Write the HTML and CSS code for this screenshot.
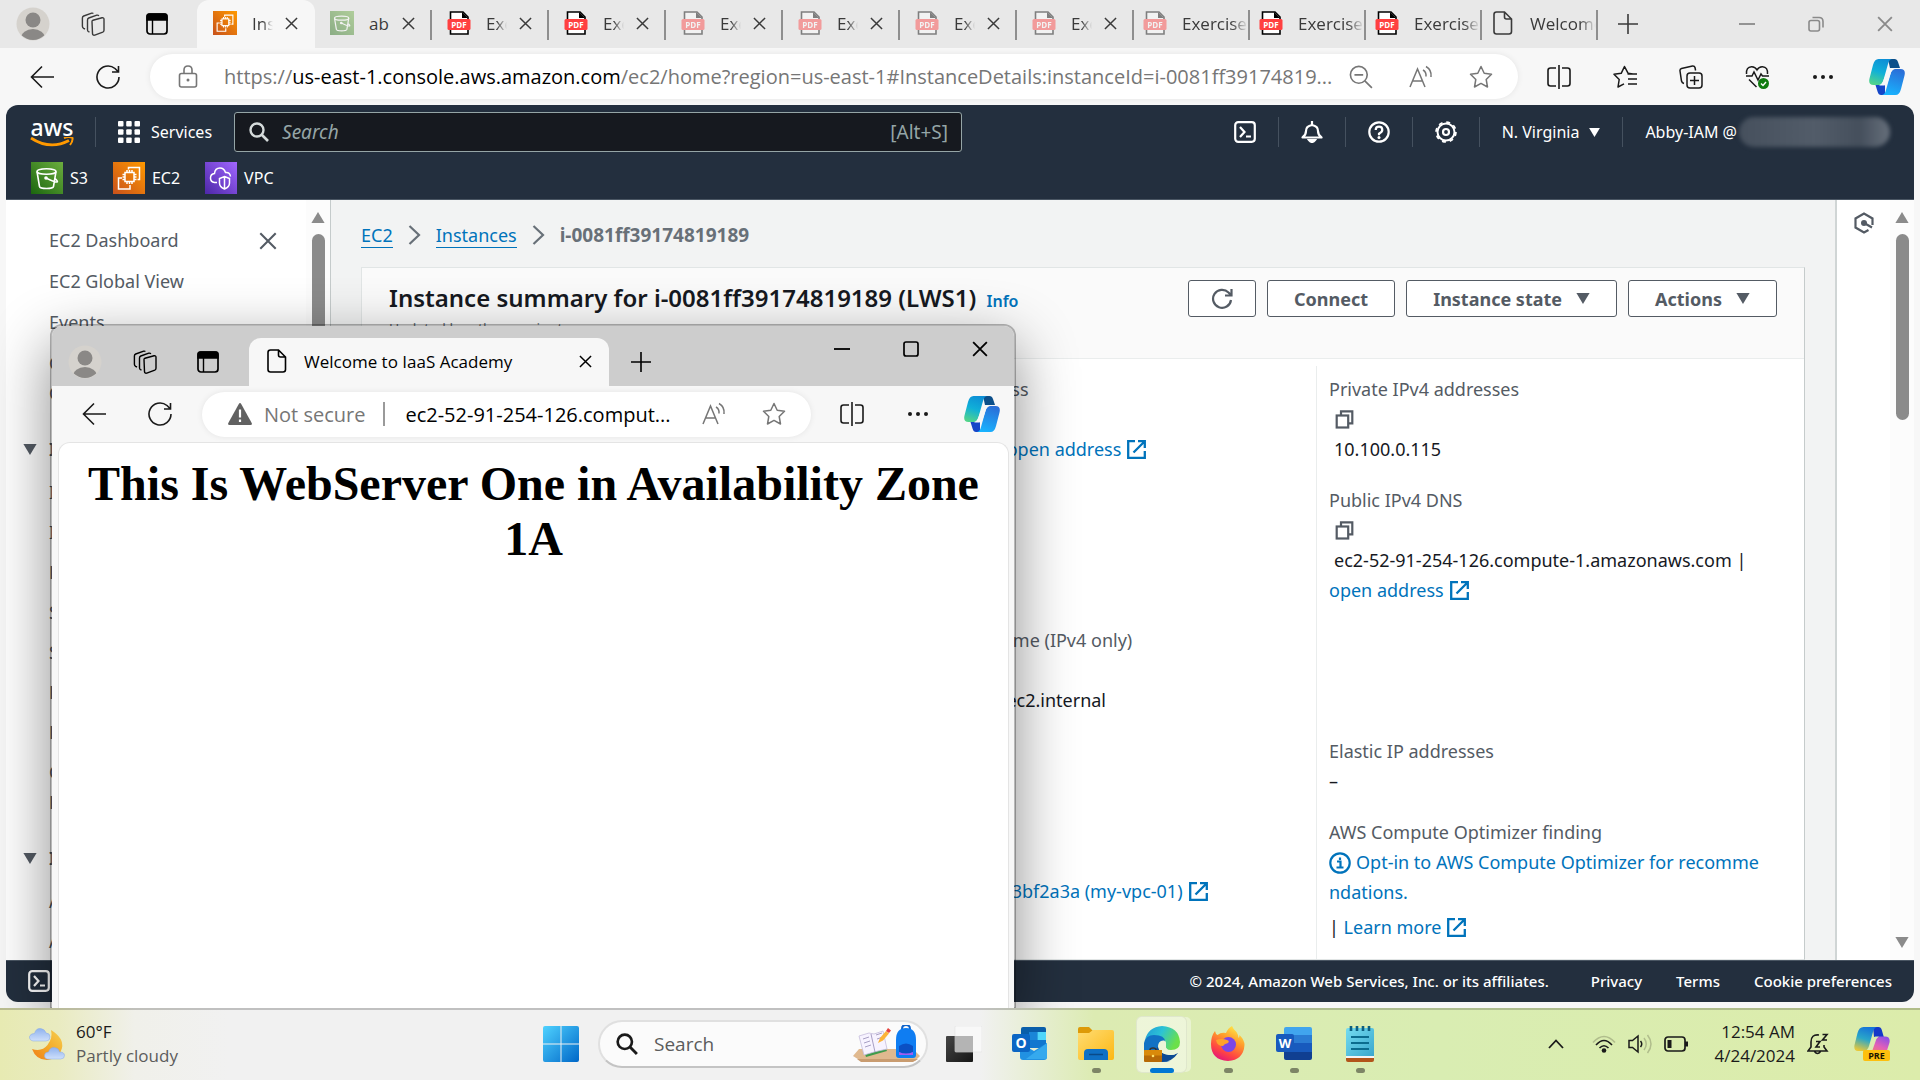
FILE: index.html
```html
<!DOCTYPE html>
<html lang="en">
<head>
<meta charset="utf-8">
<title>Instance details | EC2 | us-east-1</title>
<link rel="stylesheet" href="styles.css">
</head>
<body>
<svg class="sprite" aria-hidden="true">
  <defs>
    <linearGradient id="g-orange" x1="0" y1="1" x2="1" y2="0"><stop offset="0" stop-color="#c8511b"/><stop offset="1" stop-color="#f90"/></linearGradient>
    <linearGradient id="g-green" x1="0" y1="1" x2="1" y2="0"><stop offset="0" stop-color="#1b660f"/><stop offset="1" stop-color="#6cae3e"/></linearGradient>
    <linearGradient id="g-purple" x1="0" y1="1" x2="1" y2="0"><stop offset="0" stop-color="#4d27a8"/><stop offset="1" stop-color="#a166ff"/></linearGradient>
    <linearGradient id="g-cop1" x1="0.6" y1="0" x2="0.3" y2="1"><stop offset="0" stop-color="#0d8fd6"/><stop offset=".5" stop-color="#10b0d8"/><stop offset="1" stop-color="#52d48a"/></linearGradient>
    <linearGradient id="g-cop2" x1="0.6" y1="0" x2="0.3" y2="1"><stop offset="0" stop-color="#2a6fd8"/><stop offset="1" stop-color="#18b4ff"/></linearGradient>
    <linearGradient id="g-pre1" x1="0.6" y1="0" x2="0.3" y2="1"><stop offset="0" stop-color="#1673d8"/><stop offset=".5" stop-color="#2aa7c8"/><stop offset="1" stop-color="#e8c83a"/></linearGradient>
    <linearGradient id="g-pre2" x1="0.8" y1="0" x2="0.3" y2="1"><stop offset="0" stop-color="#8a4fe8"/><stop offset=".5" stop-color="#e25fb8"/><stop offset="1" stop-color="#f58a5a"/></linearGradient>
    <linearGradient id="g-win" gradientUnits="userSpaceOnUse" x1="0" y1="0" x2="36" y2="36"><stop offset="0" stop-color="#4fd2ff"/><stop offset="1" stop-color="#0067c8"/></linearGradient>
    <linearGradient id="g-moon" x1="1" y1="0" x2="0" y2="1"><stop offset="0" stop-color="#f6cf52"/><stop offset=".5" stop-color="#f3ab2a"/><stop offset="1" stop-color="#f07d16"/></linearGradient>
    <linearGradient id="g-cloud" x1="0" y1="0" x2="0" y2="1"><stop offset="0" stop-color="#8fb2ee"/><stop offset="1" stop-color="#cfe0fb"/></linearGradient>
    <linearGradient id="g-folder" x1="0" y1="0" x2="1" y2="1"><stop offset="0" stop-color="#ffdc73"/><stop offset="1" stop-color="#fcb814"/></linearGradient>
    <linearGradient id="g-edge" x1="0" y1="0" x2="1" y2=".4"><stop offset="0" stop-color="#1f9ad8"/><stop offset=".5" stop-color="#2cc3d5"/><stop offset="1" stop-color="#6be04a"/></linearGradient>
    <linearGradient id="g-fire" x1=".8" y1="0" x2=".3" y2="1"><stop offset="0" stop-color="#fff04a"/><stop offset=".4" stop-color="#ff9a2a"/><stop offset=".75" stop-color="#ff4542"/><stop offset="1" stop-color="#e3157a"/></linearGradient>
    <linearGradient id="g-note" x1="0" y1="0" x2="1" y2="1"><stop offset="0" stop-color="#74dcf0"/><stop offset="1" stop-color="#3aa7cd"/></linearGradient>
    <linearGradient id="g-dark" x1="0" y1="0" x2="1" y2="1"><stop offset="0" stop-color="#454545"/><stop offset="1" stop-color="#161616"/></linearGradient>
  </defs>
  <symbol id="avatar" viewBox="0 0 34 34"><clipPath id="av-clip"><circle cx="17" cy="17" r="16"/></clipPath><circle cx="17" cy="17" r="16.500" fill="#d5d2cd"/><g clip-path="url(#av-clip)" fill="#8a8886"><circle cx="17" cy="13" r="7.500"/><ellipse cx="17" cy="31" rx="12" ry="9"/></g></symbol>
  <symbol id="spaces" viewBox="0 0 24 24"><g fill="none" stroke="currentColor" stroke-width="1.400" stroke-linejoin="round"><path d="M11 9.500q0-1 1-1.300l9-2.400q2-.4 2 1.400v11q0 1.400-1.200 1.900l-8 3q-2 .6-2.300-1.500z"/><path d="M8.500 20l-1-.3q-1-.5-1-2V8q0-1.400 1.300-2l8-2.800q1.400-.4 2 .8"/><path d="M4 17l-1.400-.7q-1.200-.7-1.200-2V6q0-1.400 1.300-2l8-2.800q1-.3 1.700.3"/></g></symbol>
  <symbol id="vtabs" viewBox="0 0 22 22"><rect x="1" y="1" width="20" height="20" rx="3" fill="none" stroke="currentColor" stroke-width="1.700"/><path d="M1 3q0-2 2-2h16q2 0 2 2v4H1zM6.500 7v14" fill="currentColor" stroke="currentColor" stroke-width="1.400"/></symbol>
  <symbol id="x" viewBox="0 0 14 14"><path d="M1 1l12 12M13 1L1 13" stroke="currentColor" stroke-width="1.600" fill="none"/></symbol>
  <symbol id="plus" viewBox="0 0 22 22"><path d="M11 1v20M1 11h20" stroke="currentColor" stroke-width="1.600"/></symbol>
  <symbol id="min" viewBox="0 0 16 16"><path d="M0 8h16" stroke="currentColor" stroke-width="1.800"/></symbol>
  <symbol id="max" viewBox="0 0 16 16"><rect x="1" y="1" width="14" height="14" rx="2" fill="none" stroke="currentColor" stroke-width="1.700"/></symbol>
  <symbol id="restore" viewBox="0 0 16 16"><g fill="none" stroke="currentColor" stroke-width="1.600"><rect x="1" y="4.500" width="10.500" height="10.500" rx="2"/><path d="M4.500 1.500H11q4 0 4 4v6"/></g></symbol>
  <symbol id="pdf" viewBox="0 0 24 24"><path d="M3.500 1h12.500l5 5v17H3.500z" fill="#fff" stroke="#000" stroke-width="1.600"/><path d="M15 1l6 6h-6z" fill="#000"/><rect x="0.500" y="8" width="23" height="11" rx="1.500" fill="#ff4040"/><text x="12" y="16.500" text-anchor="middle" font-family="Open Sans, sans-serif" font-weight="700" font-size="8" fill="#fff">PDF</text></symbol>
  <symbol id="page" viewBox="0 0 20 24"><path d="M3.500 1h8l7 7v12.500q0 2.500-2.500 2.500H3.500Q1 23 1 20.500v-17Q1 1 3.500 1zM11.500 1v5q0 2 2 2h5" fill="none" stroke="currentColor" stroke-width="1.600"/></symbol>
  <symbol id="s3" viewBox="0 0 32 32"><rect width="32" height="32" fill="url(#g-green)"/><g fill="none" stroke="#fff" stroke-width="1.600"><ellipse cx="15.500" cy="9.500" rx="9.500" ry="2.700"/><path d="M6 9.500l2.500 15q.5 2 7 2t7-2L25 9.500M15 16q8 4 10.500 4t-2-4"/></g><circle cx="15" cy="16" r="1.800" fill="#fff"/></symbol>
  <symbol id="ec2" viewBox="0 0 32 32"><rect width="32" height="32" fill="url(#g-orange)"/><g fill="none" stroke="#fff" stroke-width="1.500"><rect x="12" y="10.500" width="9" height="9"/><path d="M14 8v2.500M16.500 8v2.500M19 8v2.500M14 19.500V22M16.500 19.500V22M19 19.500V22M9.500 12.500H12M9.500 15H12M9.500 17.500H12M21 12.500h2.500M21 15h2.500M21 17.500h2.500M15.500 7.500V5.500h11v12h-2M9 16H5.500v11h11.500v-4"/></g></symbol>
  <symbol id="vpc" viewBox="0 0 32 32"><rect width="32" height="32" fill="url(#g-purple)"/><g fill="none" stroke="#fff" stroke-width="1.500"><path d="M12 20.500H9.500Q5.500 20 5.500 16t4-4.500Q10 6 15 6q4 0 5.500 4.500 4.500-.5 5 4"/><path d="M19.500 14.500l5 2v4.500q0 4-5 6-5-2-5-6v-4.500zM19.500 14.500V27"/></g></symbol>
  <symbol id="back" viewBox="0 0 24 24"><path d="M24 12H1.500M12 1.500L1.500 12 12 22.500" fill="none" stroke="currentColor" stroke-width="1.600"/></symbol>
  <symbol id="reload" viewBox="0 0 24 24"><path d="M23 12A11 11 0 1 1 19 3.500L22 6.500M22.500 1v6H16" fill="none" stroke="currentColor" stroke-width="1.600"/></symbol>
  <symbol id="lock" viewBox="0 0 20 24"><rect x="1.500" y="8.500" width="17" height="13.500" rx="2" fill="none" stroke="currentColor" stroke-width="1.600"/><path d="M6 8.500V5q0-4 4-4t4 4v3.500" fill="none" stroke="currentColor" stroke-width="1.600"/><circle cx="10" cy="15" r="1.500" fill="currentColor"/></symbol>
  <symbol id="zoomout" viewBox="0 0 22 22"><g fill="none" stroke="currentColor" stroke-width="1.500"><circle cx="9" cy="9" r="7.700"/><path d="M14.500 14.500L21 21M5 9h8"/></g></symbol>
  <symbol id="aloud" viewBox="0 0 24 24"><g fill="none" stroke="currentColor" stroke-width="1.500"><path d="M1 22L8.500 4 16 22M3.500 16h10M14 5q3.500 2 3 6.500M17 1.500q6 3.500 5 10.500"/></g></symbol>
  <symbol id="star" viewBox="0 0 24 24"><path d="M12 1.500l3.200 6.800 7.300 1-5.300 5.200 1.300 7.500-6.500-3.600L5.500 22l1.300-7.500L1.500 9.300l7.300-1z" fill="none" stroke="currentColor" stroke-width="1.500" stroke-linejoin="round"/></symbol>
  <symbol id="split" viewBox="0 0 24 24"><path d="M9 3H3.500Q1 3 1 5.500v13Q1 21 3.500 21H9M15 3h5.500Q23 3 23 5.500v13q0 2.500-2.500 2.500H15M12 0v24" fill="none" stroke="currentColor" stroke-width="1.600"/></symbol>
  <symbol id="favs" viewBox="0 0 24 24"><path d="M20 9l-5-.8L11.500 1.500 8.200 8.300l-7.200 1 5.200 5.200L5 22l6-3.200M14.500 9h9.500M15 14h9M15 19h9" fill="none" stroke="currentColor" stroke-width="1.500" stroke-linejoin="round"/></symbol>
  <symbol id="collect" viewBox="0 0 24 24"><g fill="none" stroke="currentColor" stroke-width="1.500"><rect x="8" y="8" width="15" height="15" rx="3"/><path d="M15.500 11v9M11 15.500h9M5 18.500Q3 18 2.500 16L1 6q-.3-2 1.500-2.500L13.500 1q2-.2 2.500 1.500l.6 3"/></g></symbol>
  <symbol id="heart" viewBox="0 0 24 24"><g fill="none" stroke="currentColor" stroke-width="1.500"><path d="M1.500 9Q1 2 6.500 1.700 10 1.500 12 5q2-3.500 5.500-3.300Q23 2 22.500 9M1 11h6l2-4 4 8 3-6 1.500 2H24M4 14.500l7.500 7.500"/></g><circle cx="18.500" cy="18.500" r="5.500" fill="#107c10"/><path d="M16 18.500l2 2 3-3.500" fill="none" stroke="#fff" stroke-width="1.400"/></symbol>
  <symbol id="dots" viewBox="0 0 24 6"><g fill="currentColor"><circle cx="4" cy="3" r="2"/><circle cx="12" cy="3" r="2"/><circle cx="20" cy="3" r="2"/></g></symbol>
  <symbol id="copilot" viewBox="0 0 36 36"><path d="M19 0h6.500q2.500 0 3.500 3l2 6H21z" fill="#0c4f8a"/><path d="M16 36h-4q-2.500 0-3.300-3L6.500 26H16z" fill="#1546c8"/><path d="M9.500 0H23q-3 .5-4 5l-4.500 16q-1.500 5-5 5H4.500Q-1 26 .5 19.500L4 6Q5.500 0 9.500 0z" fill="url(#g-cop1)"/><path d="M26.500 36H13q3-.5 4-5l4.500-16q1.500-5 5-5h5q5.500 0 4 6.500L32 30q-1.500 6-5.500 6z" fill="url(#g-cop2)"/><path d="M21.500 10h4q-3 .8-4 5l-3.200 9.500q-1 2.500-4.300 2h-4q3-1 4.500-5.500L18 12.500q1-2.500 3.500-2.500z" fill="#f7f7f7"/></symbol>
  <symbol id="pre" viewBox="0 0 36 34"><path d="M19 0h5.500q2.500 0 3.300 3l2 7H20z" fill="#1438c8"/><path d="M9.500 0H23q-3 .5-4 5l-4 14q-1.500 5-5 5H4Q-.5 24 .5 18L3.500 6Q5 0 9.500 0z" fill="url(#g-pre1)"/><path d="M27 29H13q3-.5 4-5l4-10q1.500-4.500 5-4.500h5q5.500 0 4.500 6L32.500 25Q31 29 27 29z" fill="url(#g-pre2)"/><path d="M21.500 9.500h4q-3 .8-4 5L18.500 23h-4.500q1-1 2-4l2-7q1-2.500 3.500-2.500z" fill="#dcecb2"/><rect x="9" y="23" width="27" height="11" rx="2" fill="#fdbf0e"/><text x="22.500" y="31.500" text-anchor="middle" font-family="Open Sans, sans-serif" font-weight="700" font-size="9" fill="#1a1300">PRE</text></symbol>
  <symbol id="grid" viewBox="0 0 22 22"><g fill="#fff"><rect width="5.500" height="5.500" rx="1"/><rect x="8.200" width="5.500" height="5.500" rx="1"/><rect x="16.500" width="5.500" height="5.500" rx="1"/><rect y="8.200" width="5.500" height="5.500" rx="1"/><rect x="8.200" y="8.200" width="5.500" height="5.500" rx="1"/><rect x="16.500" y="8.200" width="5.500" height="5.500" rx="1"/><rect y="16.500" width="5.500" height="5.500" rx="1"/><rect x="8.200" y="16.500" width="5.500" height="5.500" rx="1"/><rect x="16.500" y="16.500" width="5.500" height="5.500" rx="1"/></g></symbol>
  <symbol id="search" viewBox="0 0 20 20"><circle cx="8" cy="8" r="6.500" fill="none" stroke="currentColor" stroke-width="2.400"/><path d="M12.500 12.500L19 19" stroke="currentColor" stroke-width="2.600"/></symbol>
  <symbol id="shell" viewBox="0 0 22 22"><rect x="1.200" y="1.200" width="19.600" height="19.600" rx="3" fill="none" stroke="currentColor" stroke-width="2.200"/><path d="M6 6l4.500 5L6 16M12 15.500h5" fill="none" stroke="currentColor" stroke-width="2.200"/></symbol>
  <symbol id="bell" viewBox="0 0 22 22"><path d="M1.500 16.500Q5 14 5 10q0-5 6-6 6 1 6 6 0 4 3.500 6.500z" fill="none" stroke="#fff" stroke-width="2.200" stroke-linejoin="round"/><path d="M11 0v4M8 19q3 4 6 0z" fill="#fff" stroke="#fff" stroke-width="2.200"/></symbol>
  <symbol id="help" viewBox="0 0 22 22"><g fill="none" stroke="#fff" stroke-width="2.200"><circle cx="11" cy="11" r="9.700"/><path d="M7.700 9Q7.700 5.700 11 5.700T14.300 9q0 1.800-3.300 3.700v1.500"/></g><circle cx="11" cy="16.500" r="1.500" fill="#fff"/></symbol>
  <symbol id="gear" viewBox="0 0 22 22"><g fill="none" stroke="#fff"><circle cx="11" cy="11" r="8.500" stroke-width="2"/><circle cx="11" cy="11" r="9.900" stroke-width="1.800" stroke-dasharray="3.900 3.875"/><circle cx="11" cy="11" r="3" stroke-width="2.200"/></g></symbol>
  <symbol id="caret" viewBox="0 0 12 10"><path d="M0 0h12L6 10z" fill="currentColor"/></symbol>
  <symbol id="chev" viewBox="0 0 12 20"><path d="M1 1l9.500 9L1 19" fill="none" stroke="currentColor" stroke-width="2.200"/></symbol>
  <symbol id="refresh" viewBox="0 0 22 22"><path d="M20 12a9 9 0 1 1-2.500-7.500L20 7M20.500 1v6.500H14" fill="none" stroke="currentColor" stroke-width="2.200"/></symbol>
  <symbol id="copy" viewBox="0 0 18 19"><g fill="none" stroke="#545b64" stroke-width="2.200"><rect x="1.200" y="5.500" width="11.500" height="12"/><path d="M5.500 5V1.300h11.300v12H13"/></g></symbol>
  <symbol id="ext" viewBox="0 0 19 19"><path d="M8 1.200H1.200v16.600h16.600V11M11 1.200h6.800V8M17 2L6.500 12.500" fill="none" stroke="#0073bb" stroke-width="2.300"/></symbol>
  <symbol id="info" viewBox="0 0 22 22"><circle cx="11" cy="11" r="9.700" fill="none" stroke="#0073bb" stroke-width="2.200"/><path d="M8 9.500h3.500V15M7.500 15.500h7M11 5.500v2.500" fill="none" stroke="#0073bb" stroke-width="2.200"/></symbol>
  <symbol id="hex" viewBox="0 0 20 22"><path d="M18.500 13V6.500L10 1.500l-8.500 5v9l8.500 5 4.500-2.500" fill="none" stroke="#545b64" stroke-width="2.200"/><circle cx="10" cy="11" r="3" fill="#545b64"/><path d="M11 11.500l7 4" stroke="#545b64" stroke-width="2.200"/></symbol>
  <symbol id="smile" viewBox="0 0 44 11"><path d="M1 1q19 12.500 38 2.500" fill="none" stroke="#f90" stroke-width="2.800"/><path d="M34 1q5-2 8.500 0 .5 3-2.500 7" fill="none" stroke="#f90" stroke-width="2"/></symbol>
  <symbol id="warn" viewBox="0 0 24 24"><path d="M10.800 2q1.200-2 2.400 0l10.500 19q.8 2-1.200 2h-21q-2 0-1.200-2z" fill="#616161"/><path d="M12 7.500v8M12 17.500v2.500" stroke="#fff" stroke-width="2.200"/></symbol>
  <symbol id="weather" viewBox="0 0 36 34"><path d="M22 3q13 8 11 18T18 33Q7 33 3 22q10 3 15.500-4T22 3z" fill="url(#g-moon)"/><path d="M4 14q-4-1-3.500-4.500Q2 6 5.500 6.500 7 1 11.500 1.500 16 2 17 6q4 0 4 4t-4 4z" fill="url(#g-cloud)" stroke="#86a9e6" stroke-width=".5"/><path d="M18 32q-3-1-2.500-4t4-3q1.500-5 6-4.500t5 4.500q5 0 5 3.500T31.500 32z" fill="url(#g-cloud)" stroke="#86a9e6" stroke-width=".5"/></symbol>
  <symbol id="win" viewBox="0 0 36 36"><g fill="url(#g-win)"><path d="M2 0h15.500v17.500H0V2q0-2 2-2zM18.500 0H34q2 0 2 2v15.500H18.500zM0 18.500h17.500V36H2q-2 0-2-2zM18.500 18.500H36V34q0 2-2 2H18.500z"/></g></symbol>
  <symbol id="school" viewBox="0 0 68 38"><path d="M0 31l6-7h54l7 7-5 5H8z" fill="#e0b98f"/><path d="M4 34l4 3h52l5-3z" fill="#c99c70"/><path d="M7 13l19-5 8 18-21 6z" fill="#3f9b4b"/><path d="M6 11l10-3 5 1 9-3 4 18-9 2-4 1-10 3z" fill="#f7f3ff" stroke="#c5bcdc" stroke-width=".8"/><path d="M18 9l4 18M10 14l6-2M11 18l6-2M12 22l6-2M23 10l6-2M24 14l6-2" stroke="#a89fc4"/><path d="M25 18l2-5 6-7 3 2.500-6 7z" fill="#fcb438"/><path d="M33 6l2-3 3 2.500L36 8z" fill="#e5443f"/><path d="M49 4q0-4 4-4t4 4" fill="none" stroke="#0e62c9" stroke-width="2"/><path d="M43 15q0-12 10-12t10 12v15q0 3-3 3H46q-3 0-3-3z" fill="#0f7df2"/><path d="M46 21q7-5 14 0v6q-7 4-14 0z" fill="#0b50c4"/><path d="M46 27q7 3 14 0v3H46z" fill="#a45cf0"/></symbol>
  <symbol id="tasks" viewBox="0 0 36 36"><rect x="0" y="10" width="27" height="26" rx="1" fill="url(#g-dark)"/><rect x="9" y="0" width="27" height="26" rx="1" fill="#f8f8f8" stroke="#e2e2e2" stroke-width=".6"/><path d="M9 10h18v16H9z" fill="#b4b4b4"/></symbol>
  <symbol id="outlook" viewBox="0 0 36 34"><path d="M9 2q0-2 2-2h21q2 0 2 2v16H9z" fill="#0a5eaa"/><path d="M17 5h8.500v8H17z" fill="#1a86d8"/><path d="M25.500 5H34v8h-8.500z" fill="#4fd6fa"/><path d="M17 13h17v8H17z" fill="#1177cf"/><path d="M8 16l14 8 13-8v14q0 3-3 3H11q-3 0-3-3z" fill="#2191e2"/><path d="M35 16L14 32h19q2 0 2-2z" fill="#35a9ee"/><rect y="7" width="18" height="18" rx="2" fill="#0c66c4"/><text x="9" y="21" text-anchor="middle" font-family="Open Sans, sans-serif" font-weight="700" font-size="14" fill="#fff">O</text></symbol>
  <symbol id="folder" viewBox="0 0 36 34"><path d="M0 2q0-2 2-2h9l4 4v6H0z" fill="#dd9a08"/><path d="M0 6h11l4-3h19q2 0 2 2v26q0 2-2 2H2q-2 0-2-2z" fill="url(#g-folder)"/><path d="M6 33v-7q0-4 4-4h16q4 0 4 4v7z" fill="#0f70c4"/><path d="M11 27.500h14" stroke="#0a4a88" stroke-width="1.500"/></symbol>
  <symbol id="edge" viewBox="0 0 36 36"><path d="M1 14Q4 1 18 0q17 1 18 16 0 8-9 8-6 0-5-4 1-6-5-8-9-3-16 2z" fill="url(#g-edge)"/><path d="M0 17q2-8 10-8 12 0 11 8-7-2-7 6 0 10 12 12Q8 39 0 24z" fill="#1272c4"/><path d="M15 20q0 8 10 9 5 0 9-2-6 9-16 9-7-2-7-9 0-4 4-7z" fill="#0c4a94"/><path d="M14 21q0-7 6-6.500 3 1.500 1.500 5.500 1 5 6.500 5 4 0 7-2-1 6-8 6-12-1-13-8z" fill="#ecf5d8"/><rect y="24" width="18" height="12" rx="1" fill="#b76a06"/><path d="M0 25q0-1 1-1h16q1 0 1 1v4.500H0z" fill="#d98a0a"/><path d="M6 24q0-2 3-2t3 2" fill="none" stroke="#333" stroke-width="1.500"/><circle cx="9" cy="30" r="1.300" fill="#ffe066"/></symbol>
  <symbol id="firefox" viewBox="0 0 34 36"><path d="M17 35Q0 34 0 18 0 10 4 5q.5 3 2.500 4Q10 6 15 7q2-5 6-7 1 3 4.500 6 2 3 2 6 1-1 1-3 5 5 5 10-1 15-16.500 16z" fill="url(#g-fire)"/><circle cx="17.500" cy="18.500" r="7.500" fill="#7b46e8"/><path d="M5 14q6-2 11 0 3 1 1 3-4 1-5 3-6 0-7-6z" fill="#ffa22a"/></symbol>
  <symbol id="word" viewBox="0 0 36 34"><path d="M8 2q0-2 2-2h24q2 0 2 2v6H8z" fill="#41a5ee"/><path d="M8 8h28v8H8z" fill="#2b7cd3"/><path d="M8 16h28v9H8z" fill="#185abd"/><path d="M8 25h28v6q0 2-2 2H10q-2 0-2-2z" fill="#103f91"/><rect y="7" width="18" height="18" rx="2" fill="#185abd"/><text x="9" y="21" text-anchor="middle" font-family="Open Sans, sans-serif" font-weight="700" font-size="13" fill="#fff">W</text></symbol>
  <symbol id="notepad" viewBox="0 0 28 36"><path d="M0 30h28v4q0 2-2 2H2q-2 0-2-2z" fill="#b2541a"/><path d="M0 28h28v4H0z" fill="#f4f4f4"/><path d="M0 4q0-2 2-2h24q2 0 2 2v26H0z" fill="url(#g-note)"/><path d="M5 0v5M11 0v5M17 0v5M23 0v5" stroke="#0d5f80" stroke-width="2.600"/><path d="M5 11h18M5 17h18M5 23h18" stroke="#0b6c8e" stroke-width="1.800"/></symbol>
  <symbol id="up" viewBox="0 0 16 10"><path d="M1 9l7-7.500L15 9" fill="none" stroke="#1a1a1a" stroke-width="1.800"/></symbol>
  <symbol id="wifi" viewBox="0 0 24 18"><g fill="none" stroke-width="1.600"><path d="M1 7.500q11-12 22 0" stroke="#b0bd8c"/><path d="M4 10q8-9 16 0M7.500 13q4.500-4.500 9 0" stroke="#1a1a1a"/></g><circle cx="12" cy="15.500" r="2.300" fill="#1a1a1a"/></symbol>
  <symbol id="volume" viewBox="0 0 24 20"><g fill="none" stroke-width="1.500"><path d="M1 6.500h3.500L10 2v16l-5.500-4.500H1zM12.500 7q2.500 3 0 6" stroke="#1a1a1a"/><path d="M16 4q4.500 6 0 12M19.500 1q7 9 0 18" stroke="#b0bd8c"/></g></symbol>
  <symbol id="battery" viewBox="0 0 24 16"><rect x="1" y="1" width="20" height="14" rx="3" fill="none" stroke="#1a1a1a" stroke-width="1.700"/><path d="M3.500 4h4v8h-4zM21 5.500h3v5h-3z" fill="#1a1a1a"/></symbol>
  <symbol id="snooze" viewBox="0 0 22 22"><g fill="none" stroke="#1a1a1a" stroke-width="1.600"><path d="M12 2Q4 1 4 9v5l-3 4h19l-3-4v-2M7.500 18.500q3 4 6 0M9 8.500h4l-4 5.500h4M15.500 1.500H20L15.500 7H20"/></g></symbol>
</svg>

<div class="desktop">
  <main class="browser">
    <header class="tabs">
      <button class="ico tabs-avatar" aria-label="Profile"><svg class="i34"><use href="#avatar"/></svg></button>
      <button class="ico tabs-space" aria-label="Workspaces"><svg class="i24"><use href="#spaces"/></svg></button>
      <button class="ico tabs-vert" aria-label="Tab actions"><svg class="i22"><use href="#vtabs"/></svg></button>
      <nav class="tablist" aria-label="Tabs">
        <div class="tab active"><svg class="i24"><use href="#ec2"/></svg><span class="tab-name">Instance</span><button class="ico" aria-label="Close tab"><svg class="i13"><use href="#x"/></svg></button></div>
        <div class="tab"><svg class="i24 faded"><use href="#s3"/></svg><span class="tab-name whole">ab</span><button class="ico" aria-label="Close tab"><svg class="i13"><use href="#x"/></svg></button></div>
        <div class="tab"><svg class="i24"><use href="#pdf"/></svg><span class="tab-name">Exercise</span><button class="ico" aria-label="Close tab"><svg class="i13"><use href="#x"/></svg></button></div>
        <div class="tab"><svg class="i24"><use href="#pdf"/></svg><span class="tab-name">Exercise</span><button class="ico" aria-label="Close tab"><svg class="i13"><use href="#x"/></svg></button></div>
        <div class="tab"><svg class="i24 faded"><use href="#pdf"/></svg><span class="tab-name">Exercise</span><button class="ico" aria-label="Close tab"><svg class="i13"><use href="#x"/></svg></button></div>
        <div class="tab"><svg class="i24 faded"><use href="#pdf"/></svg><span class="tab-name">Exercise</span><button class="ico" aria-label="Close tab"><svg class="i13"><use href="#x"/></svg></button></div>
        <div class="tab"><svg class="i24 faded"><use href="#pdf"/></svg><span class="tab-name">Exercise</span><button class="ico" aria-label="Close tab"><svg class="i13"><use href="#x"/></svg></button></div>
        <div class="tab"><svg class="i24 faded"><use href="#pdf"/></svg><span class="tab-name">Exercise</span><button class="ico" aria-label="Close tab"><svg class="i13"><use href="#x"/></svg></button></div>
        <div class="tab wide"><svg class="i24 faded"><use href="#pdf"/></svg><span class="tab-name">Exercise</span></div>
        <div class="tab wide"><svg class="i24"><use href="#pdf"/></svg><span class="tab-name">Exercise</span></div>
        <div class="tab wide"><svg class="i24"><use href="#pdf"/></svg><span class="tab-name">Exercise</span></div>
        <div class="tab wide"><svg class="i24"><use href="#page"/></svg><span class="tab-name">Welcome</span></div>
      </nav>
      <button class="ico tabs-new" aria-label="New tab"><svg class="i22"><use href="#plus"/></svg></button>
      <div class="winctl dim">
        <button class="ico" aria-label="Minimize"><svg class="i16"><use href="#min"/></svg></button>
        <button class="ico" aria-label="Restore"><svg class="i16"><use href="#restore"/></svg></button>
        <button class="ico" aria-label="Close"><svg class="i16"><use href="#x"/></svg></button>
      </div>
    </header>

    <div class="toolbar">
      <button class="ico" aria-label="Back"><svg class="i24"><use href="#back"/></svg></button>
      <button class="ico tool-reload" aria-label="Reload"><svg class="i24"><use href="#reload"/></svg></button>
      <div class="omnibox">
        <svg class="i24"><use href="#lock"/></svg>
        <div class="url" role="textbox" aria-label="Address">https://<b>us-east-1.console.aws.amazon.com</b>/ec2/home?region=us-east-1#InstanceDetails:instanceId=i-0081ff39174819...</div>
        <button class="ico" aria-label="Zoom out"><svg class="i24"><use href="#zoomout"/></svg></button>
        <button class="ico" aria-label="Read aloud"><svg class="i24"><use href="#aloud"/></svg></button>
        <button class="ico" aria-label="Add to favorites"><svg class="i24"><use href="#star"/></svg></button>
      </div>
      <div class="tool-actions">
        <button class="ico" aria-label="Split screen"><svg class="i24"><use href="#split"/></svg></button>
        <button class="ico" aria-label="Favorites"><svg class="i24"><use href="#favs"/></svg></button>
        <button class="ico" aria-label="Collections"><svg class="i24"><use href="#collect"/></svg></button>
        <button class="ico" aria-label="Browser essentials"><svg class="i24"><use href="#heart"/></svg></button>
        <button class="ico" aria-label="Settings and more"><svg class="i24"><use href="#dots"/></svg></button>
        <button class="ico" aria-label="Copilot"><svg class="i36"><use href="#copilot"/></svg></button>
      </div>
    </div>

    <section class="console">
      <header class="awsnav">
        <div class="awsnav-top">
          <a class="aws-logo" href="#home">aws<svg><use href="#smile"/></svg></a>
          <i class="vr"></i>
          <button class="services"><svg class="i22"><use href="#grid"/></svg>Services</button>
          <label class="aws-search"><svg class="i20"><use href="#search"/></svg><input type="text" placeholder="Search" aria-label="Search"><span>[Alt+S]</span></label>
          <div class="aws-tools">
            <button class="ico" aria-label="CloudShell"><svg class="i22"><use href="#shell"/></svg></button><i class="vr"></i>
            <button class="ico" aria-label="Notifications"><svg class="i22"><use href="#bell"/></svg></button><i class="vr"></i>
            <button class="ico" aria-label="Help"><svg class="i22"><use href="#help"/></svg></button><i class="vr"></i>
            <button class="ico" aria-label="Settings"><svg class="i22"><use href="#gear"/></svg></button><i class="vr"></i>
            <button class="region">N. Virginia<svg class="caret"><use href="#caret"/></svg></button><i class="vr"></i>
            <button class="account">Abby-IAM @<span class="smudge"></span></button>
          </div>
        </div>
        <nav class="awsnav-favs">
          <a href="#s3"><svg class="i32"><use href="#s3"/></svg>S3</a>
          <a href="#ec2"><svg class="i32"><use href="#ec2"/></svg>EC2</a>
          <a href="#vpc"><svg class="i32"><use href="#vpc"/></svg>VPC</a>
        </nav>
      </header>

      <div class="console-body">
        <aside class="sidebar">
          <nav class="side-nav">
            <button class="ico side-close" aria-label="Close navigation"><svg class="i18"><use href="#x"/></svg></button>
            <ul>
              <li><a href="#d">EC2 Dashboard</a></li>
              <li><a href="#g">EC2 Global View</a></li>
              <li><a href="#e">Events</a></li>
              <li><a href="#c">Console-to-Code<br>Console Preview</a></li>
            </ul>
            <details open><summary><svg class="tri"><use href="#caret"/></svg>Instances</summary>
              <ul>
                <li><a href="#i">Instances</a></li>
                <li><a href="#t">Instance Types</a></li>
                <li><a href="#l">Launch Templates</a></li>
                <li><a href="#s">Spot Requests</a></li>
                <li><a href="#p">Savings Plans</a></li>
                <li><a href="#r">Reserved Instances</a></li>
                <li><a href="#h">Dedicated Hosts</a></li>
                <li><a href="#cr">Capacity<br>Reservations</a></li>
              </ul>
            </details>
            <details open><summary><svg class="tri"><use href="#caret"/></svg>Images</summary>
              <ul>
                <li><a href="#a">AMIs</a></li>
                <li><a href="#ac">AMI Catalog</a></li>
              </ul>
            </details>
          </nav>
          <div class="scroll"><svg class="arrow up"><use href="#caret"/></svg><i class="thumb tall"></i></div>
        </aside>

        <section class="page">
          <nav class="crumbs" aria-label="Breadcrumb">
            <a href="#ec2">EC2</a><svg><use href="#chev"/></svg><a href="#inst">Instances</a><svg><use href="#chev"/></svg><strong>i-0081ff39174819189</strong>
          </nav>
          <article class="card">
            <header class="card-head">
              <div class="card-title">
                <h1>Instance summary for i-0081ff39174819189 (LWS1) <a href="#info">Info</a></h1>
                <p>Updated less than a minute ago</p>
              </div>
              <div class="card-actions">
                <button aria-label="Refresh"><svg class="i22"><use href="#refresh"/></svg></button>
                <button>Connect</button>
                <button>Instance state<svg><use href="#caret"/></svg></button>
                <button>Actions<svg><use href="#caret"/></svg></button>
              </div>
            </header>
            <div class="card-grid">
              <dl></dl>
              <dl>
                <div class="cell-tall"><dt>Public IPv4 address</dt><dd><svg class="copy"><use href="#copy"/></svg><br><span class="val">52.91.254.126</span> | <a href="#o">open address<svg class="ext"><use href="#ext"/></svg></a></dd></div>
                <div class="cell-host"><dt>Private IP DNS name (IPv4 only)</dt><dd><svg class="copy"><use href="#copy"/></svg><br><span class="val">ip-10-100-0-115.ec2.internal</span></dd></div>
                <div><dt>VPC ID</dt><dd><svg class="copy"><use href="#copy"/></svg><br><a href="#v">vpc-0d4e91c7a583bf2a3a (my-vpc-01)<svg class="ext"><use href="#ext"/></svg></a></dd></div>
              </dl>
              <dl>
                <div class="cell"><dt>Private IPv4 addresses</dt><dd><svg class="copy"><use href="#copy"/></svg><br><span class="val">10.100.0.115</span></dd></div>
                <div class="cell-tall"><dt>Public IPv4 DNS</dt><dd><svg class="copy"><use href="#copy"/></svg><br><span class="val">ec2-52-91-254-126.compute-1.amazonaws.com</span> |<br><a href="#o2">open address<svg class="ext"><use href="#ext"/></svg></a></dd></div>
                <div class="cell-short"><dt>Elastic IP addresses</dt><dd>–</dd></div>
                <div><dt>AWS Compute Optimizer finding</dt><dd><a href="#opt"><svg class="infoicon"><use href="#info"/></svg>Opt-in to AWS Compute Optimizer for recomme<br>ndations.</a><p class="learn">| <a href="#lm">Learn more<svg class="ext"><use href="#ext"/></svg></a></p></dd></div>
              </dl>
            </div>
          </article>
        </section>

        <aside class="tools"><button class="ico" aria-label="Tools"><svg class="i22"><use href="#hex"/></svg></button></aside>
        <div class="scroll"><svg class="arrow up"><use href="#caret"/></svg><i class="thumb"></i><svg class="arrow down"><use href="#caret"/></svg></div>
      </div>

      <footer class="awsfoot">
        <button class="ico" aria-label="CloudShell"><svg class="i22"><use href="#shell"/></svg></button>
        <span class="copyright">© 2024, Amazon Web Services, Inc. or its affiliates.</span>
        <a href="#privacy">Privacy</a><a href="#terms">Terms</a><a href="#cookies">Cookie preferences</a>
      </footer>
    </section>
  </main>

  <section class="popup" aria-label="Welcome to IaaS Academy">
    <header class="tabs pop-tabs">
      <button class="ico tabs-avatar" aria-label="Profile"><svg class="i34"><use href="#avatar"/></svg></button>
      <button class="ico tabs-space" aria-label="Workspaces"><svg class="i24"><use href="#spaces"/></svg></button>
      <button class="ico tabs-vert" aria-label="Tab actions"><svg class="i22"><use href="#vtabs"/></svg></button>
      <div class="tab active"><svg class="i24"><use href="#page"/></svg><span class="tab-name">Welcome to IaaS Academy</span><button class="ico" aria-label="Close tab"><svg class="i13"><use href="#x"/></svg></button></div>
      <button class="ico tabs-new" aria-label="New tab"><svg class="i22"><use href="#plus"/></svg></button>
      <div class="winctl">
        <button class="ico" aria-label="Minimize"><svg class="i16"><use href="#min"/></svg></button>
        <button class="ico" aria-label="Maximize"><svg class="i16"><use href="#max"/></svg></button>
        <button class="ico" aria-label="Close"><svg class="i16"><use href="#x"/></svg></button>
      </div>
    </header>
    <div class="toolbar">
      <button class="ico" aria-label="Back"><svg class="i24"><use href="#back"/></svg></button>
      <button class="ico tool-reload" aria-label="Reload"><svg class="i24"><use href="#reload"/></svg></button>
      <div class="omnibox">
        <svg class="i24"><use href="#warn"/></svg><span class="insecure">Not secure</span><i class="bar"></i>
        <input class="url" type="text" aria-label="Address" value="ec2-52-91-254-126.comput...">
        <button class="ico" aria-label="Read aloud"><svg class="i24"><use href="#aloud"/></svg></button>
        <button class="ico" aria-label="Add to favorites"><svg class="i24"><use href="#star"/></svg></button>
      </div>
      <div class="tool-actions">
        <button class="ico" aria-label="Split screen"><svg class="i24"><use href="#split"/></svg></button>
        <button class="ico" aria-label="Settings and more"><svg class="i24"><use href="#dots"/></svg></button>
        <button class="ico" aria-label="Copilot"><svg class="i36"><use href="#copilot"/></svg></button>
      </div>
    </div>
    <div class="site"><h2>This Is WebServer One in Availability Zone 1A</h2></div>
  </section>

  <footer class="taskbar">
    <button class="weather"><svg class="i36"><use href="#weather"/></svg><span>60°F<small>Partly cloudy</small></span></button>
    <div class="dock">
      <button class="ico" aria-label="Start"><svg class="i36"><use href="#win"/></svg></button>
      <label class="tb-search"><svg class="i22"><use href="#search"/></svg><input type="text" placeholder="Search" aria-label="Search Windows"><svg class="school"><use href="#school"/></svg></label>
      <button class="app" aria-label="Task view"><svg class="i36"><use href="#tasks"/></svg></button>
      <button class="app" aria-label="Outlook"><svg class="i36"><use href="#outlook"/></svg></button>
      <button class="app running" aria-label="File Explorer"><svg class="i36"><use href="#folder"/></svg></button>
      <button class="app running current" aria-label="Edge"><svg class="i36"><use href="#edge"/></svg></button>
      <button class="app running" aria-label="Firefox"><svg class="i36"><use href="#firefox"/></svg></button>
      <button class="app running" aria-label="Word"><svg class="i36"><use href="#word"/></svg></button>
      <button class="app running" aria-label="Notepad"><svg class="i36"><use href="#notepad"/></svg></button>
    </div>
    <div class="tray">
      <button class="ico" aria-label="Hidden icons"><svg class="i16"><use href="#up"/></svg></button>
      <button class="ico status" aria-label="Network, volume, battery"><svg class="i24"><use href="#wifi"/></svg><svg class="i24"><use href="#volume"/></svg><svg class="i24"><use href="#battery"/></svg></button>
      <button class="clock">12:54 AM<br>4/24/2024</button>
      <button class="ico" aria-label="Notifications"><svg class="i22"><use href="#snooze"/></svg></button>
      <button class="ico tray-pre" aria-label="Copilot preview"><svg class="i36"><use href="#pre"/></svg></button>
    </div>
  </footer>
</div>
</body>
</html>
```
FILE: styles.css
```css
* { box-sizing: border-box; }
body { margin: 0; font-family: "Open Sans", sans-serif; color: #16191f; overflow: hidden; }
button, input { font: inherit; color: inherit; background: none; border: 0; padding: 0; margin: 0; outline: 0; }
ul, dl, dd, p, h1, h2 { margin: 0; padding: 0; list-style: none; }
svg { display: block; flex: none; }
a { color: #0073bb; text-decoration: none; }
.sprite { position: absolute; width: 0; height: 0; }
.ico { display: flex; align-items: center; justify-content: center; flex: none; }
.i13 { width: 13px; height: 13px; }
.i16 { width: 16px; height: 16px; }
.i18 { width: 18px; height: 18px; }
.i20 { width: 20px; height: 20px; }
.i22 { width: 22px; height: 22px; }
.i24 { width: 24px; height: 24px; }
.i32 { width: 32px; height: 32px; }
.i34 { width: 34px; height: 34px; }
.i36 { width: 36px; height: 36px; }
.faded { opacity: .45; }

.desktop { position: relative; display: flex; flex-direction: column; height: 100vh; overflow: hidden; background: #f7f7f7; }
.browser { flex: 1; min-height: 0; display: flex; flex-direction: column; padding-bottom: 6px; }

/* Tab strip */
.tabs { display: flex; align-items: center; height: 48px; flex: none; background: #e8e8e8; padding-left: 16px; color: #3a3a3a; font-size: 17px; }
.tabs-space { margin-left: 31px; }
.tabs-vert { margin-left: 41px; color: #000; }
.tablist { display: flex; margin-left: 29px; height: 48px; }
.tab { position: relative; display: flex; align-items: center; width: 117px; height: 48px; padding: 0 0 2px 15px; gap: 15px; }
.tab-name { width: 21px; overflow: hidden; white-space: nowrap; -webkit-mask-image: linear-gradient(90deg, #000 50%, transparent); mask-image: linear-gradient(90deg, #000 50%, transparent); }
.tab-name.whole { -webkit-mask-image: none; mask-image: none; }
.tab .ico { margin-left: -3px; }
.tab::after { content: ""; position: absolute; right: 0; top: 10px; width: 2px; height: 30px; background: #8f8f8f; }
.tab.active { width: 118px; padding-left: 16px; background: #f7f7f7; border-radius: 12px 12px 0 0; }
.tab.active::after { display: none; }
.tab.wide { width: 116px; padding-left: 9px; }
.tab.wide .tab-name { width: 66px; margin-right: -5px; -webkit-mask-image: linear-gradient(90deg, #000 75%, transparent); mask-image: linear-gradient(90deg, #000 75%, transparent); }
.tabs-new { margin-left: 19px; }
.winctl { display: flex; gap: 53px; margin-left: auto; padding-right: 27px; color: #000; }
.winctl.dim { color: #8a8a8a; }

/* Toolbar */
.toolbar { display: flex; align-items: center; height: 57px; flex: none; padding: 0 15px 0 30px; background: #f7f7f7; color: #1a1a1a; }
.tool-reload { margin-left: 42px; }
.omnibox { flex: 1; display: flex; align-items: center; height: 45px; margin-left: 30px; padding: 0 25px 0 26px; background: #fff; border-radius: 23px; box-shadow: 0 0 6px rgba(0,0,0,.08); color: #767676; font-size: 20px; min-width: 0; }
.omnibox .ico { margin-left: 36px; }
.omnibox .url { flex: 1; margin-left: 24px; min-width: 0; overflow: hidden; white-space: nowrap; }
.omnibox .url + .ico { margin-left: 12px; }
.url b { color: #000; font-weight: 400; }
.tool-actions { display: flex; align-items: center; gap: 42px; margin-left: 29px; }
.tool-actions .ico:last-child { margin-left: -8px; }

/* AWS console */
.console { flex: 1; min-height: 0; display: flex; flex-direction: column; margin: 0 6px; border-radius: 12px; overflow: hidden; font-family: "Noto Sans", sans-serif; font-size: 18px; }
.awsnav { background: #232f3e; color: #fff; height: 95px; border-bottom: 1px solid #4a5663; flex: none; font-size: 16px; }
.awsnav-top { display: flex; align-items: center; height: 54px; padding-left: 24px; }
.aws-logo { color: #fff; width: 44px; font-size: 23px; font-weight: 500; line-height: 20px; text-align: center; }
.aws-logo svg { width: 44px; height: 11px; }
.vr { width: 1px; height: 30px; background: #45515f; flex: none; }
.aws-logo + .vr { margin-left: 21px; }
.services { display: flex; align-items: center; gap: 11px; margin-left: 22px; }
.aws-search { display: flex; align-items: center; height: 40px; width: 728px; margin-left: 22px; padding: 0 13px 0 14px; gap: 13px; background: #16191f; border: 1px solid #95a5a6; border-radius: 3px; color: #d5dbdb; font-size: 19px; }
.aws-search input { flex: 1; min-width: 0; }
.aws-search input::placeholder { color: #95a5a6; font-style: italic; opacity: 1; }
.aws-search span { color: #95a5a6; }
.aws-tools { display: flex; align-items: center; margin-left: auto; gap: 22px; padding-right: 24px; }
.region, .account { display: flex; align-items: center; }
.region { gap: 10px; }
.caret { width: 11px; height: 9px; }
.smudge { width: 151px; height: 30px; margin-left: 2px; border-radius: 16px; background: linear-gradient(90deg, #46505d, #525c69 50%, #454f5c 80%, #666f7b); filter: blur(2px); }
.awsnav-favs { display: flex; height: 40px; align-items: center; padding: 0 0 2px 25px; gap: 25px; }
.awsnav-favs a { display: flex; align-items: center; gap: 7px; color: #fff; }

.console-body { flex: 1; min-height: 0; display: flex; background: #fff; overflow: hidden; }
.sidebar { display: flex; width: 325px; flex: none; border-right: 1px solid #c5cbcb; overflow: hidden; }
.side-nav { position: relative; flex: 1; padding-top: 25px; line-height: 30px; white-space: nowrap; }
.side-nav ul { display: flex; flex-direction: column; gap: 11px; padding-left: 43px; }
.side-nav a { color: #545b64; display: block; }
.side-close { position: absolute; right: 29px; top: 32px; color: #545b64; }
.side-nav details { padding-top: 26px; }
.side-nav details ul { gap: 10px; }
.side-nav summary { display: flex; align-items: center; gap: 12px; padding: 0 0 13px 17px; font-weight: 700; color: #545b64; }
.tri { width: 14px; height: 11px; }
.scroll { display: flex; flex-direction: column; align-items: center; width: 24px; flex: none; padding: 12px 0; background: #fcfcfc; color: #8b8b8b; }
.arrow { width: 14px; height: 11px; }
.arrow.up { transform: rotate(180deg); }
.arrow.down { margin-top: auto; }
.thumb { width: 13px; height: 186px; margin-top: 11px; border-radius: 7px; background: #8b8b8b; }
.thumb.tall { flex: 1; }

.page { flex: 1; min-width: 0; background: #f2f3f3; padding: 20px 30px 0 30px; display: flex; flex-direction: column; }
.crumbs { display: flex; align-items: center; gap: 15px; height: 30px; flex: none; color: #687078; }
.crumbs a { border-bottom: 1px solid #0073bb; line-height: 24px; }
.crumbs svg { width: 13px; height: 20px; }
.crumbs strong { font-size: 19px; }
.card { flex: 1; min-height: 0; margin-top: 17px; background: #fff; border: 1px solid #e1e5e5; border-right-color: #c5cbcb; display: flex; flex-direction: column; }
.card-head { display: flex; justify-content: space-between; height: 91px; padding: 12px 27px 0 27px; background: #fafafa; border-bottom: 1px solid #eaeded; flex: none; }
.card h1 { font-size: 24px; line-height: 36px; font-weight: 600; white-space: nowrap; }
.card h1 a { font-size: 16px; margin-left: 4px; }
.card-title p { font-size: 14px; line-height: 20px; color: #687078; }
.card-actions { display: flex; gap: 11px; height: 37px; }
.card-actions button { display: flex; align-items: center; gap: 14px; padding: 0 26px; border: 1px solid #545b64; border-radius: 3px; background: #fff; color: #545b64; font-weight: 700; }
.card-actions button:first-child { padding: 0 22px; }
.card-actions button svg:not(.i22) { width: 14px; height: 11px; }
.card-grid { flex: 1; min-height: 0; display: grid; grid-template-columns: 490fr 464fr 488fr; padding: 7px 0 0 0; line-height: 30px; white-space: nowrap; }
.card-grid dl { padding: 8px 0 0 12px; border-left: 1px solid #eaeded; }
.card-grid dt { color: #545b64; }
.cell { min-height: 111px; }
.cell-tall { min-height: 251px; }
.cell-short { min-height: 81px; }
.cell-host { min-height: 191px; }
.learn { margin-top: 5px; }
.copy { width: 19px; height: 19px; margin-left: 6px; display: inline-block; vertical-align: -3px; }
.ext { width: 19px; height: 19px; margin-left: 6px; display: inline-block; vertical-align: -3px; }
.infoicon { width: 22px; height: 22px; margin-right: 5px; display: inline-block; vertical-align: -5px; }
.val { margin-left: 5px; }
.tools { width: 55px; border-left: 2px solid #d0d5d5; padding: 12px 0 0 16px; }
.awsfoot { display: flex; align-items: center; height: 42px; flex: none; padding: 0 22px 2px; gap: 34px; background: #232f3e; border-top: 1px solid #4a5663; color: #fff; font-size: 15px; font-weight: 500; }
.awsfoot a { color: #fff; }
.copyright { margin: 0 8px 0 auto; }

/* Foreground window */
.popup { position: absolute; left: 50px; top: 324px; width: 966px; bottom: 72px; display: flex; flex-direction: column; border: 2px solid rgba(0,0,0,.28); border-bottom: 0; border-radius: 12px 12px 0 0; background: #f7f7f7; background-clip: padding-box; box-shadow: 0 20px 60px rgba(0,0,0,.45); }
.pop-tabs { height: 60px; background: #cdcdcd; border-radius: 10px 10px 0 0; color: #000; padding-top: 12px; }
.pop-tabs .tabs-vert { margin-left: 40px; }
.pop-tabs .tab { width: 360px; margin-left: 30px; padding: 0 17px 2px 16px; }
.pop-tabs .tab-name { width: auto; flex: 1; -webkit-mask-image: none; mask-image: none; }
.pop-tabs .tabs-new { margin-left: 21px; }
.pop-tabs .winctl { align-self: flex-start; margin-top: 3px; padding-right: 26px; }
.popup .toolbar { height: 56px; padding-right: 14px; }
.insecure { margin-left: 12px; white-space: nowrap; }
.bar { width: 2px; height: 24px; margin-left: 18px; background: #9a9a9a; flex: none; }
.omnibox input.url { margin-left: 20px; color: #000; }
.site { flex: 1; margin: 0 5px 0 6px; padding: 13px 12px; background: #fff; border: 1px solid #e4e4e4; border-bottom: 0; border-radius: 12px 12px 0 0; text-align: center; }
.site h2 { font: 700 48px/55px "Liberation Serif", serif; color: #000; }

/* Taskbar */
.taskbar { position: relative; display: grid; grid-template-columns: 1fr auto 1fr; align-items: center; height: 72px; flex: none; padding-bottom: 2px; border-top: 2px solid rgba(0,0,0,.2); background: linear-gradient(90deg, #e7eab2 0, #e9ebc0 3%, #f0f0ea 7%, #f1f1f1 12%, #f1f1f1 51%, #dcebb2 57%, #d9edb2 75%, #dcecab); font-size: 17px; color: #1a1a1a; }
.weather { display: flex; align-items: center; gap: 11px; padding-left: 29px; text-align: left; line-height: 24px; }
.weather small { display: block; font-size: 17px; color: #5c5c5c; }
.dock { display: flex; align-items: center; margin-left: 16px; }
.tb-search { display: flex; align-items: center; width: 330px; height: 48px; margin: 0 3px 0 19px; padding: 0 5px 0 16px; gap: 16px; background: #fbfbfb; border: 2px solid #e0e0e0; border-bottom-color: #c4c4c4; border-radius: 24px; font-size: 19px; }
.tb-search input { flex: 1; min-width: 0; }
.tb-search input::placeholder { color: #5c5c5c; opacity: 1; }
.school { width: 68px; height: 38px; }
.app { position: relative; display: flex; align-items: center; justify-content: center; width: 66px; height: 68px; }
.app.running::after { content: ""; position: absolute; bottom: 5px; width: 9px; height: 5px; border-radius: 3px; background: #7d8566; }
.app.current::before { content: ""; position: absolute; inset: 6px 8px 5px 7px; border-radius: 6px; background: rgba(255,255,255,.5); border: 1px solid rgba(0,0,0,.06); box-shadow: 5px 0 0 -1px rgba(255,255,255,.4); }
.app.current::after { width: 24px; background: #0078d4; }
.app svg { position: relative; }
.tray { display: flex; align-items: center; justify-content: flex-end; padding-right: 30px; }
.status { gap: 12px; margin-left: 28px; }
.clock { text-align: right; line-height: 24px; margin: 0 12px 0 26px; }
.tray-pre { margin-left: 25px; }
```
